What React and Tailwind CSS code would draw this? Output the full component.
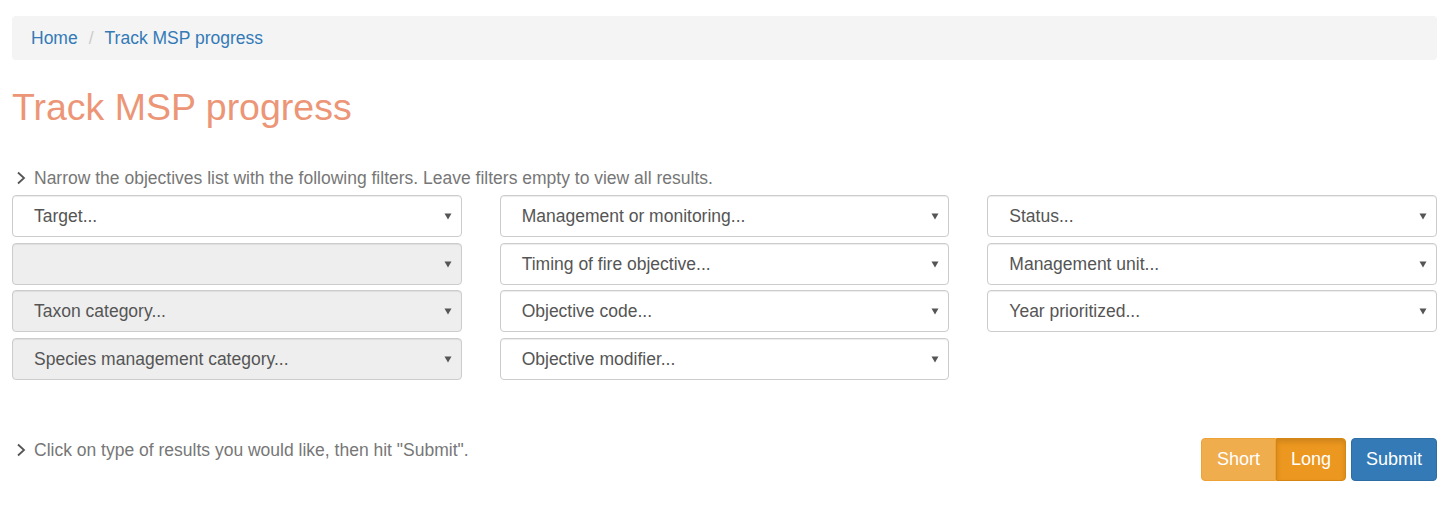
import React from 'react';

const filters = [
  { label: 'Target...', disabled: false },
  { label: 'Management or monitoring...', disabled: false },
  { label: 'Status...', disabled: false },
  { label: '', disabled: true },
  { label: 'Timing of fire objective...', disabled: false },
  { label: 'Management unit...', disabled: false },
  { label: 'Taxon category...', disabled: true },
  { label: 'Objective code...', disabled: false },
  { label: 'Year prioritized...', disabled: false },
  { label: 'Species management category...', disabled: true },
  { label: 'Objective modifier...', disabled: false },
];

function Caret() {
  return (
    <svg width="8" height="8" viewBox="0 0 8 8" className="shrink-0">
      <polygon points="0.5,1.5 7.5,1.5 4,7.5" fill="#555" />
    </svg>
  );
}

function Chevron() {
  return (
    <svg width="10" height="14" viewBox="0 0 10 14" className="shrink-0 mr-[8px]">
      <polyline points="2,1.5 8,7 2,12.5" fill="none" stroke="#555" strokeWidth="1.8" />
    </svg>
  );
}

function FilterSelect({ label, disabled }) {
  return (
    <div
      className={`h-[42px] flex items-center justify-between pl-[21px] pr-[9px] rounded-[4px] border border-[#cccccc] shadow-[inset_0_1px_1px_rgba(0,0,0,0.075)] text-[17.5px] text-[#555555] ${
        disabled ? 'bg-[#eeeeee]' : 'bg-white'
      }`}
    >
      <span>{label}</span>
      <Caret />
    </div>
  );
}

export default function App() {
  return (
    <div className="min-h-[505px] bg-white px-[12px] pt-[16px] font-['Liberation_Sans',Arial,sans-serif] text-[17.5px] text-[#333333]">
      {/* Breadcrumb */}
      <div className="h-[44px] flex items-center px-[19px] bg-[#f4f4f4] rounded-[4px]">
        <a className="text-[#337ab7]">Home</a>
        <span className="text-[#cccccc] px-[11px]">/</span>
        <a className="text-[#337ab7]">Track MSP progress</a>
      </div>

      <h1 className="mt-[27px] text-[37.5px] leading-[1.1] text-[#ec9677]">Track MSP progress</h1>

      {/* Filters */}
      <div className="mt-[38px] flex items-center pl-[4px] text-[#777777] h-[24px]">
        <Chevron />
        <span>Narrow the objectives list with the following filters. Leave filters empty to view all results.</span>
      </div>

      <div className="mt-[5px] grid grid-cols-3 gap-x-[38px] gap-y-[5.5px]">
        {filters.map((f, i) => (
          <FilterSelect key={i} label={f.label} disabled={f.disabled} />
        ))}
      </div>

      {/* Results type */}
      <div className="mt-[57px] flex items-start justify-between">
        <div className="flex items-center pl-[4px] text-[#777777] h-[24px] mt-[1px]">
          <Chevron />
          <span>Click on type of results you would like, then hit "Submit".</span>
        </div>
        <div className="flex items-center gap-[5px] mt-[1px]">
          <div className="flex">
            <button className="h-[43px] px-[15px] bg-[#f0ad4e] text-white text-[18px] rounded-l-[4px] border border-[#eea236]">
              Short
            </button>
            <button className="h-[43px] px-[14px] bg-[#ec971f] text-white text-[18px] rounded-r-[4px] border border-[#d58512] shadow-[inset_0_3px_5px_rgba(0,0,0,0.125)]">
              Long
            </button>
          </div>
          <button className="h-[43px] px-[14px] bg-[#337ab7] text-white text-[18px] rounded-[4px] border border-[#2e6da4]">
            Submit
          </button>
        </div>
      </div>
    </div>
  );
}
